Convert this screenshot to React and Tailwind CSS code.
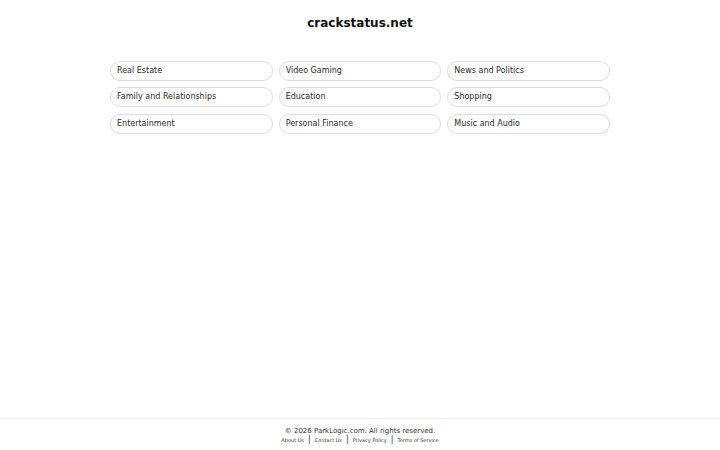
const categories = [
  'Real Estate',
  'Video Gaming',
  'News and Politics',
  'Family and Relationships',
  'Education',
  'Shopping',
  'Entertainment',
  'Personal Finance',
  'Music and Audio',
];

const footerLinks = ['About Us', 'Contact Us', 'Privacy Policy', 'Terms of Service'];

const App = () => {
  return (
    <div className="flex min-h-screen flex-col bg-white font-['DejaVu_Sans',sans-serif] text-[#222]">
      <main className="flex-1">
        <h1 className="pt-[14px] text-center text-[12px] font-bold leading-[18px] text-[#111]">crackstatus.net</h1>
        <div className="mx-auto mt-[28.5px] grid w-[500px] grid-cols-3 gap-x-[6px] gap-y-[6.5px]">
          {categories.map((name) => (
            <a
              key={name}
              href="#"
              className="block h-[20px] rounded-full border border-[#ddd] px-[6px] text-[8px] leading-[18px] text-[#2a2a2a]"
            >
              {name}
            </a>
          ))}
        </div>
      </main>
      <footer className="h-[32px] border-t border-[#eee] pt-[7px] text-center">
        <p className="text-[7px] leading-[10px] text-[#333]">© 2026 ParkLogic.com. All rights reserved.</p>
        <div className="flex items-center justify-center text-[5px] leading-[8px] text-[#333]">
          {footerLinks.map((link, i) => (
            <span key={link} className="flex items-center">
              {i > 0 && <span className="mx-[4px] text-[8px] leading-[8px]">|</span>}
              <a href="#">{link}</a>
            </span>
          ))}
        </div>
      </footer>
    </div>
  );
};

export default App;
